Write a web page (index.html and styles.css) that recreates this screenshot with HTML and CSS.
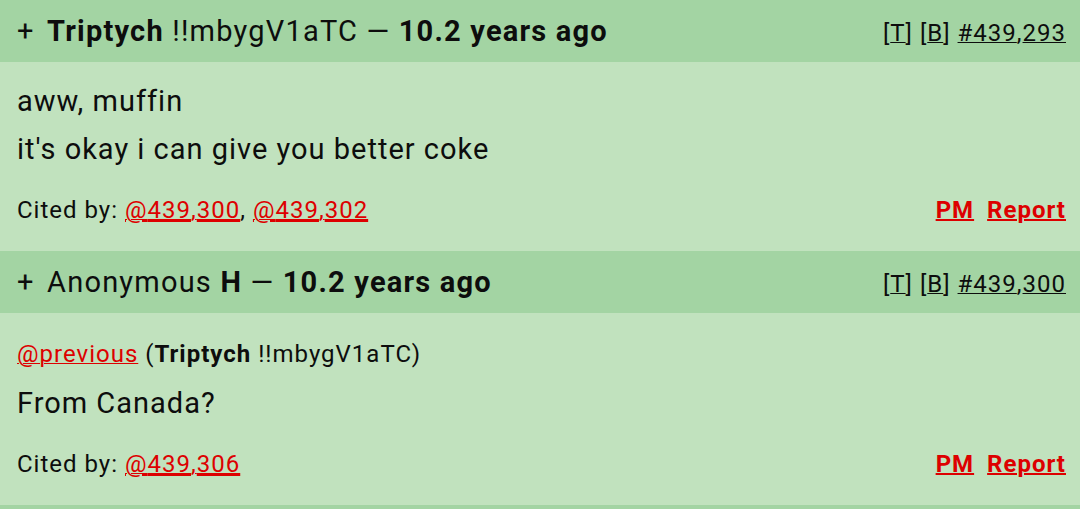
FILE: index.html
```html
<!DOCTYPE html>
<html>
<head>
<meta charset="utf-8">
<link rel="stylesheet" href="styles.css">
</head>
<body>
<div class="thread">
  <article class="post">
    <header class="post-head">
      <div class="head-left">
        <span class="plus">+</span>
        <span class="name">Triptych</span> <span class="trip">!!mbygV1aTC</span> <span class="dash">—</span> <span class="age">10.2 years ago</span>
      </div>
      <div class="head-right">
        [<u>T</u>] [<u>B</u>] <a class="num" href="#"><span>#439</span>,<span>293</span></a>
      </div>
    </header>
    <div class="post-body">
      <p class="line">aww, muffin</p>
      <p class="line">it's okay i can give you better coke</p>
      <footer class="post-foot">
        <div class="cited">Cited by: <a class="cite" href="#"><span>@</span><span>439</span>,<span>300</span></a>, <a class="cite" href="#"><span>@</span><span>439</span>,<span>302</span></a></div>
        <div class="actions"><a href="#">PM</a><a href="#">Report</a></div>
      </footer>
    </div>
  </article>
  <article class="post">
    <header class="post-head">
      <div class="head-left">
        <span class="plus">+</span>
        <span class="anon">Anonymous</span> <span class="name">H</span> <span class="dash">—</span> <span class="age">10.2 years ago</span>
      </div>
      <div class="head-right">
        [<u>T</u>] [<u>B</u>] <a class="num" href="#"><span>#439</span>,<span>300</span></a>
      </div>
    </header>
    <div class="post-body">
      <p class="quote"><a class="cite" href="#">@previous</a> (<b>Triptych</b> !!mbygV1aTC)</p>
      <p class="line">From Canada?</p>
      <footer class="post-foot">
        <div class="cited">Cited by: <a class="cite" href="#"><span>@</span><span>439</span>,<span>306</span></a></div>
        <div class="actions"><a href="#">PM</a><a href="#">Report</a></div>
      </footer>
    </div>
  </article>
  <article class="post">
    <header class="post-head"></header>
  </article>
</div>
</body>
</html>
```
FILE: styles.css
```css
html, body {
  margin: 0;
  padding: 0;
}
body {
  font-family: Roboto, "Liberation Sans", sans-serif;
  color: #0d0d0d;
  background: #c1e2be;
  overflow: hidden;
  height: 509px;
}
.post-head {
  background: #a3d4a3;
  display: flex;
  justify-content: space-between;
  align-items: baseline;
  padding: 14px 14px 14px 17px;
  height: 34px;
  line-height: 34px;
}
.head-left {
  font-size: 29px;
  letter-spacing: 1.2px;
}
.plus {
  margin-right: 4px;
}
.name, .age {
  font-weight: 700;
}
.head-right {
  font-size: 24px;
  letter-spacing: 1px;
}
.head-right u {
  text-decoration-thickness: 1px;
}
.num {
  color: #0d0d0d;
}
.num span {
  text-decoration: underline;
  text-decoration-thickness: 1px;
}
a {
  text-decoration: none;
}
.post-body {
  background: #c1e2be;
  padding: 15px 14px 21px 17px;
}
.line {
  margin: 0;
  font-size: 29px;
  line-height: 48px;
  letter-spacing: 1px;
}
.quote {
  margin: 8px 0 7px;
  font-size: 24px;
  line-height: 36px;
  letter-spacing: 1px;
}
.quote b {
  font-weight: 700;
}
.cite {
  color: #dd0000;
  text-decoration: underline;
  text-decoration-thickness: 1px;
}
.cite span {
  text-decoration: underline;
}
.post-foot {
  margin-top: 17px;
  display: flex;
  justify-content: space-between;
  align-items: baseline;
  font-size: 24px;
  line-height: 40px;
  letter-spacing: 1px;
}
.actions {
  display: flex;
  gap: 13px;
}
.actions a {
  color: #dd0000;
  font-weight: 700;
  text-decoration: underline;
  text-decoration-thickness: 2px;
}
```
